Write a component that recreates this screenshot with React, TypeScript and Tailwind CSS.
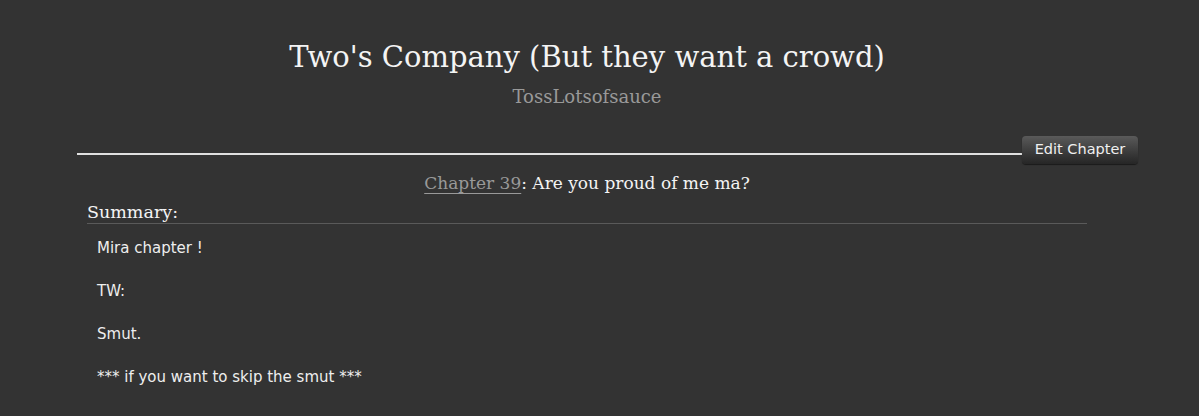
export default function App() {
  return (
    <div className="min-h-[416px] w-full bg-[#333333] pt-[37px] text-white">
      <div className="ml-[77px] w-[1020px]">
        <h1 className="text-center font-['DejaVu_Serif',serif] text-[29px] leading-[40px] text-[#f4f4f4]">
          Two's Company (But they want a crowd)
        </h1>
        <p className="mt-[8px] text-center font-['DejaVu_Serif',serif] text-[18px] leading-[24px] text-[#999999]">
          TossLotsofsauce
        </p>
      </div>

      <div className="ml-[77px] mt-[27px] flex w-[1061px] items-end">
        <div className="mb-[10px] h-[2px] flex-1 bg-[#e0e0e0]" />
        <button className="mb-[1px] h-[28px] w-[116px] rounded-[4px] bg-gradient-to-b from-[#5a5a5a] to-[#262626] font-['DejaVu_Sans',sans-serif] text-[14.5px] text-[#f0f0f0] shadow-[0_1px_1px_rgba(0,0,0,0.5)]">
          Edit Chapter
        </button>
      </div>

      <div className="ml-[77px] w-[1020px]">
        <h2 className="mt-[6px] text-center font-['DejaVu_Serif',serif] text-[17px] leading-[24px] text-[#f4f4f4]">
          <a className="text-[#999999] underline decoration-1 underline-offset-4">
            Chapter 39
          </a>
          : Are you proud of me ma?
        </h2>

        <div className="mx-[10px] mt-[6px]">
          <h3 className="border-b border-[#5a5a5a] font-['DejaVu_Serif',serif] text-[17.5px] leading-[22px] text-[#f4f4f4]">
            Summary:
          </h3>
          <div className="mt-[14px] space-y-[22px] pl-[10px] font-['DejaVu_Sans',sans-serif] text-[15px] leading-[21px] text-[#eeeeee]">
            <p>Mira chapter !</p>
            <p>TW:</p>
            <p>Smut.</p>
            <p>*** if you want to skip the smut ***</p>
          </div>
        </div>
      </div>
    </div>
  );
}
